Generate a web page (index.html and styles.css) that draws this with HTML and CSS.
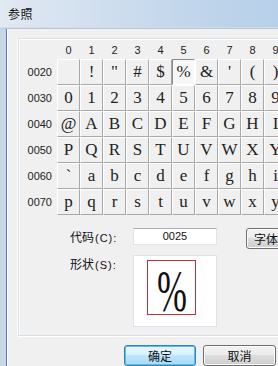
FILE: index.html
```html
<!DOCTYPE html>
<html lang="zh-CN">
<head>
  <meta charset="UTF-8">
  <title>参照</title>
  <link rel="stylesheet" href="styles.css">
</head>
<body>

  <div class="window">
    <div class="titlebar"><span class="title">参照</span></div>

    <div class="client">
      <div class="group">

        <!-- character chart -->
        <div class="chart">
          <div class="corner"></div>
          <div class="colhead">0</div><div class="colhead">1</div><div class="colhead">2</div><div class="colhead">3</div><div class="colhead">4</div>
          <div class="colhead">5</div><div class="colhead">6</div><div class="colhead">7</div><div class="colhead">8</div><div class="colhead">9</div>

          <div class="rowhead">0020</div>
          <div class="cell"> </div><div class="cell">!</div><div class="cell">"</div><div class="cell">#</div><div class="cell">$</div>
          <div class="cell selected">%</div><div class="cell">&amp;</div><div class="cell">'</div><div class="cell">(</div><div class="cell">)</div>

          <div class="rowhead">0030</div>
          <div class="cell">0</div><div class="cell">1</div><div class="cell">2</div><div class="cell">3</div><div class="cell">4</div>
          <div class="cell">5</div><div class="cell">6</div><div class="cell">7</div><div class="cell">8</div><div class="cell">9</div>

          <div class="rowhead">0040</div>
          <div class="cell">@</div><div class="cell">A</div><div class="cell">B</div><div class="cell">C</div><div class="cell">D</div>
          <div class="cell">E</div><div class="cell">F</div><div class="cell">G</div><div class="cell">H</div><div class="cell">I</div>

          <div class="rowhead">0050</div>
          <div class="cell">P</div><div class="cell">Q</div><div class="cell">R</div><div class="cell">S</div><div class="cell">T</div>
          <div class="cell">U</div><div class="cell">V</div><div class="cell">W</div><div class="cell">X</div><div class="cell">Y</div>

          <div class="rowhead">0060</div>
          <div class="cell">`</div><div class="cell">a</div><div class="cell">b</div><div class="cell">c</div><div class="cell">d</div>
          <div class="cell">e</div><div class="cell">f</div><div class="cell">g</div><div class="cell">h</div><div class="cell">i</div>

          <div class="rowhead">0070</div>
          <div class="cell">p</div><div class="cell">q</div><div class="cell">r</div><div class="cell">s</div><div class="cell">t</div>
          <div class="cell">u</div><div class="cell">v</div><div class="cell">w</div><div class="cell">x</div><div class="cell">y</div>
        </div>

        <!-- code / shape -->
        <div class="fields">
          <div class="label">代码<span class="key">(C):</span></div>
          <div class="input">0025</div>
          <div class="btn font-btn">字体</div>

          <div class="label">形状<span class="key">(S):</span></div>
          <div class="preview">
            <div class="glyph-box"><span class="glyph">%</span></div>
          </div>
        </div>

      </div>

      <div class="actions">
        <div class="btn default">确定</div>
        <div class="btn">取消</div>
      </div>
    </div>
  </div>

</body>
</html>
```

FILE: styles.css
```css
*{
margin: 0;
padding: 0;
box-sizing: border-box;
}

body{
width: 278px;
height: 366px;
overflow: hidden;
background: #f0f0f0;
font-family: 'Noto Sans CJK SC', sans-serif;
}

.window{
width: 300px;
height: 366px;
display: flex;
flex-direction: column;
}

.titlebar{
height: 28px;
flex: none;
display: flex;
align-items: center;
padding-left: 8px;
background-image: linear-gradient(to right, #e1e9f2, #cfdeee 35%, #bcd3ea 75%, #b6cfe9);
border-bottom: 1px solid #d3dde8;
}

.title{
font-size: 12px;
color: #111;
letter-spacing: 0.5px;
}

/* window frame stripe on the left, then the client area */
.client{
flex: 1;
padding: 9px 0 0 12px;
border-left: 6px solid #c6d6ea;
box-shadow: inset 1px 0 0 #5d789e, inset 2px 0 0 #ffffff;
border-top: 1px solid #b9c6d6;
background: #f0f0f0;
}

.group{
border-top: 1px solid #d5dfe5;
border-left: 1px solid #d5dfe5;
border-bottom: 1px solid #d5dfe5;
box-shadow: inset 1px 1px 0 #ffffff, 0 1px 0 #ffffff, -1px 0 0 #ffffff;
padding: 2px 0 8px 0;
}

.chart{
display: grid;
grid-template-columns: 38px repeat(10, 23px);
grid-template-rows: 18px repeat(6, 26px);
}

.colhead{
font-family: 'Liberation Sans', sans-serif;
font-size: 11px;
color: #222;
text-align: center;
line-height: 18px;
}

.rowhead{
font-family: 'Liberation Sans', sans-serif;
font-size: 11px;
color: #222;
text-align: right;
padding-right: 5px;
line-height: 26px;
}

.cell{
font-family: 'Liberation Serif', serif;
font-size: 17px;
color: #222;
text-align: center;
line-height: 24px;
background: #f0f0f0;
border-top: 1px solid #ffffff;
border-left: 1px solid #ffffff;
border-right: 1px solid #a8a8a8;
border-bottom: 1px solid #a8a8a8;
white-space: pre;
}

.cell.selected{
background: #f7f7f7;
border-top: 1px solid #8c8c8c;
border-left: 1px solid #8c8c8c;
border-right: 1px solid #ffffff;
border-bottom: 1px solid #ffffff;
}

.fields{
display: grid;
grid-template-columns: 63px 84px 29px auto;
grid-template-rows: 17px 72px;
row-gap: 10px;
margin: 13px 0 0 51px;
}

.label{
font-size: 12px;
color: #111;
line-height: 17px;
white-space: nowrap;
}

.key{
font-family: 'Liberation Sans', sans-serif;
font-size: 11px;
margin-left: 1px;
letter-spacing: 1px;
}

.input{
grid-column: 2;
background: #ffffff;
border: 1px solid #e2e3ea;
border-top-color: #abadb3;
font-family: 'Liberation Sans', sans-serif;
font-size: 11px;
color: #111;
text-align: center;
line-height: 15px;
}

.preview{
grid-column: 2;
background: #ffffff;
border: 1px solid #dfe3e8;
padding: 4px 0 0 13px;
}

.glyph-box{
width: 49px;
height: 55px;
border: 1px solid #b8343d;
display: flex;
justify-content: center;
align-items: center;
overflow: hidden;
}

.glyph{
font-family: 'Liberation Serif', serif;
font-size: 60px;
line-height: 1;
color: #111;
transform: scaleX(0.6);
margin-top: 6px;
}

.actions{
display: flex;
gap: 7px;
margin: 9px 0 0 106px;
}

.btn{
width: 73px;
height: 21px;
display: flex;
align-items: center;
justify-content: center;
font-size: 12px;
color: #111;
border: 1px solid #707070;
border-radius: 3px;
background-image: linear-gradient(#f2f2f2, #ebebeb 50%, #dddddd 50%, #cfcfcf);
box-shadow: inset 0 0 0 1px #fcfcfc;
}

.btn.default{
width: 72px;
border-color: #3c7fb1;
background-image: linear-gradient(#eaf6fd, #d9f0fc 50%, #bee6fd 50%, #a7d9f5);
box-shadow: inset 0 0 0 1px #48c4f5;
}

/* cut off by the window edge, text sits near its left side */
.btn.font-btn{
grid-column: 4;
width: 40px;
justify-content: flex-start;
padding-left: 7px;
}
```
